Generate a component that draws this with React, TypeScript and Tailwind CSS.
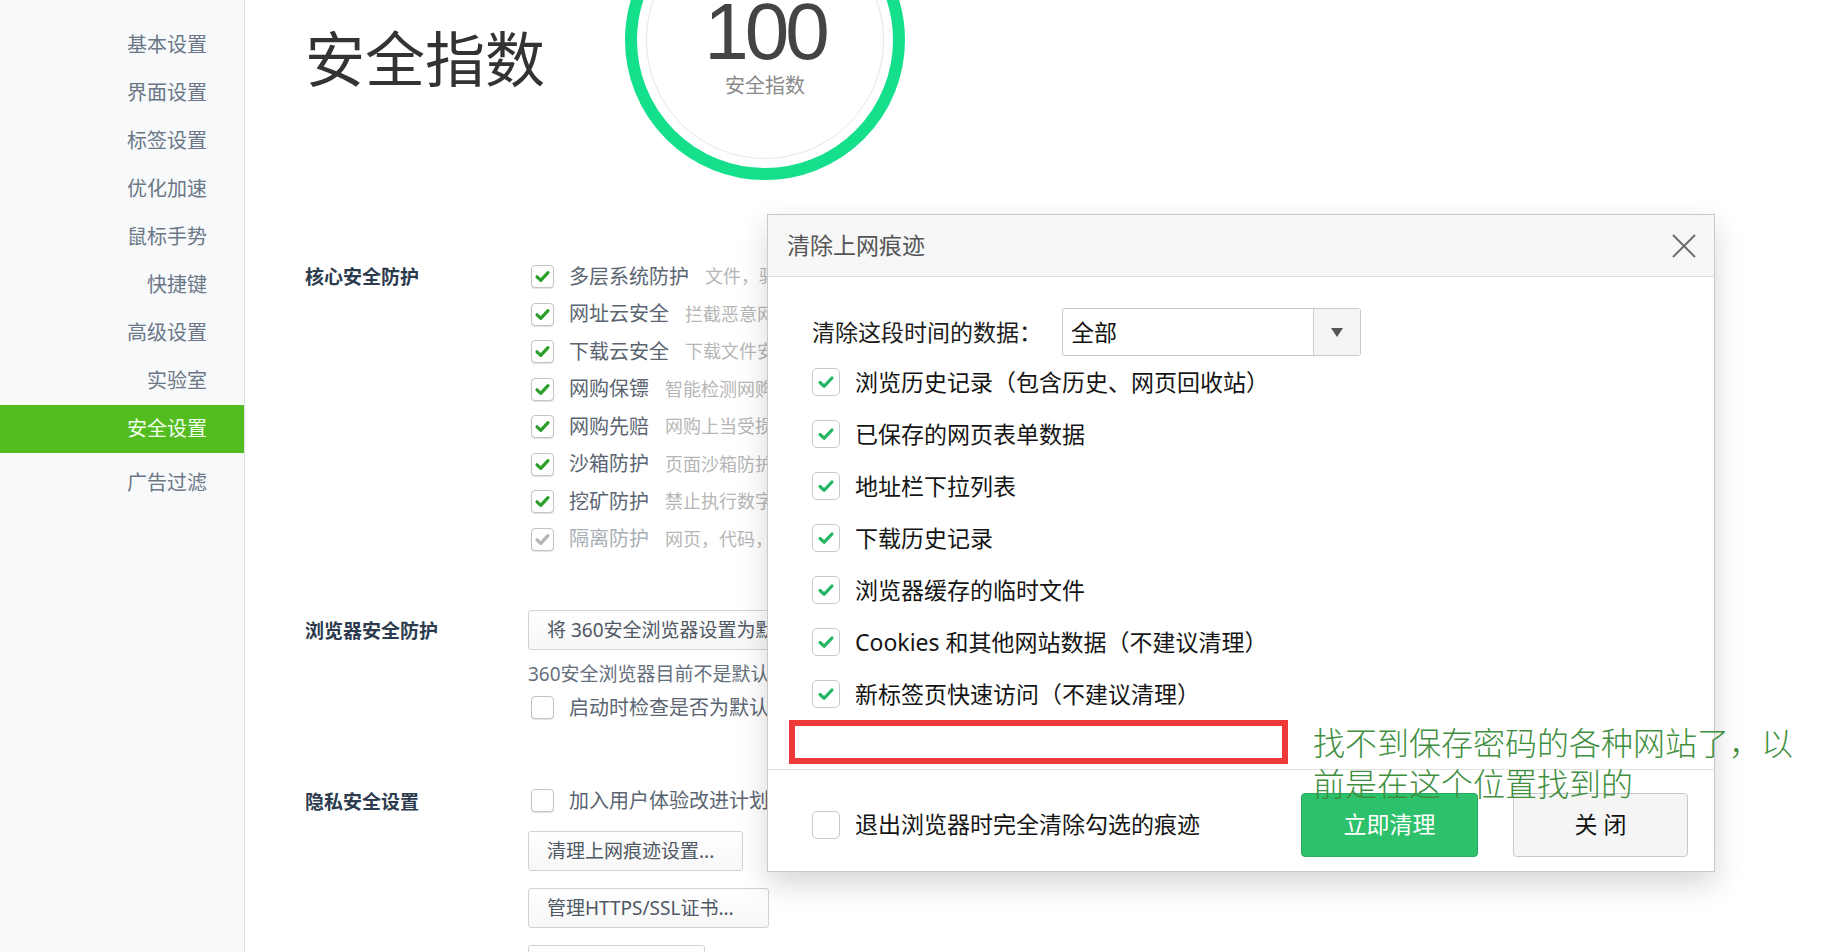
import React from "react"

const FONT = { fontFamily: '"Noto Sans", "Noto Sans CJK SC", sans-serif' }

const navItems = ["基本设置", "界面设置", "标签设置", "优化加速", "鼠标手势", "快捷键", "高级设置", "实验室"]

const coreRows = [
  { label: "多层系统防护", desc: "文件，驱动，注册表多层防护" },
  { label: "网址云安全", desc: "拦截恶意网址和钓鱼网站" },
  { label: "下载云安全", desc: "下载文件安全检测" },
  { label: "网购保镖", desc: "智能检测网购环境安全" },
  { label: "网购先赔", desc: "网购上当受损先行赔付" },
  { label: "沙箱防护", desc: "页面沙箱防护恶意代码" },
  { label: "挖矿防护", desc: "禁止执行数字货币挖矿脚本" },
  { label: "隔离防护", desc: "网页，代码，插件隔离运行", disabled: true },
]

const clearRows = [
  "浏览历史记录（包含历史、网页回收站）",
  "已保存的网页表单数据",
  "地址栏下拉列表",
  "下载历史记录",
  "浏览器缓存的临时文件",
  "Cookies 和其他网站数据（不建议清理）",
  "新标签页快速访问（不建议清理）",
]

function SmallBox({ checked, disabled }: { checked?: boolean; disabled?: boolean }) {
  return (
    <div className="w-[23px] h-[23px] shrink-0 rounded-[4px] border border-[#c4c4c4] bg-white shadow-[0_1px_1px_rgba(0,0,0,0.12)] flex items-center justify-center">
      {checked && (
        <svg width="17" height="17" viewBox="0 0 17 17">
          <path
            d="M3 8.8 L6.8 12.4 L14 4.6"
            fill="none"
            stroke={disabled ? "#b4b4b4" : "#2a9f2a"}
            strokeWidth="3.2"
            strokeLinecap="round"
            strokeLinejoin="round"
          />
        </svg>
      )}
    </div>
  )
}

function BigBox({ checked }: { checked?: boolean }) {
  return (
    <div className="w-[28px] h-[28px] shrink-0 rounded-[5px] border border-[#cacaca] bg-white flex items-center justify-center">
      {checked && (
        <svg width="20" height="20" viewBox="0 0 20 20">
          <path
            d="M4 10.5 L8.2 14.2 L16 6"
            fill="none"
            stroke="#24b662"
            strokeWidth="3.2"
            strokeLinecap="round"
            strokeLinejoin="round"
          />
        </svg>
      )}
    </div>
  )
}

function GrayButton({ children, width }: { children: React.ReactNode; width: string }) {
  return (
    <div
      className={`${width} h-[40px] shrink-0 rounded-[3px] border border-[#cfd2d6] bg-gradient-to-b from-white to-[#f7f7f7] pl-[18px] flex items-center text-[19px] text-[#4f5864] whitespace-nowrap overflow-hidden`}
    >
      {children}
    </div>
  )
}

function Sidebar() {
  return (
    <aside className="w-[245px] shrink-0 h-full bg-[#f7f9fb] border-r border-[#dadde1] pt-[21px]">
      {navItems.map((n) => (
        <div key={n} className="h-[48px] pr-[37px] flex items-center justify-end text-[20px] text-[#6b7786]">
          {n}
        </div>
      ))}
      <div className="h-[48px] pr-[37px] flex items-center justify-end text-[20px] text-[#f2fff0] bg-[#53bd1f]">
        安全设置
      </div>
      <div className="mt-[6px] h-[48px] pr-[37px] flex items-center justify-end text-[20px] text-[#6b7786]">
        广告过滤
      </div>
    </aside>
  )
}

function ScoreRing() {
  return (
    <div className="-mt-[100px] w-[280px] h-[280px] shrink-0 rounded-full border-[12px] border-[#14e08b] flex items-center justify-center">
      <div className="w-[238px] h-[238px] rounded-full border border-[#ece4e4] relative">
        <div className="absolute left-0 right-0 top-[70px] flex flex-col items-center">
          <div
            className="text-[80px] leading-none tracking-[-4px] text-[#444]"
            style={{ fontFamily: '"Liberation Sans", Arial, sans-serif' }}
          >
            100
          </div>
          <div className="mt-[1px] text-[20px] leading-[26px] text-[#8a8a8a]">安全指数</div>
        </div>
      </div>
    </div>
  )
}

function MainPage() {
  return (
    <main className="flex-1 pl-[60px]">
      <div className="flex h-[258px] items-start">
        <h1 className="w-[320px] mt-[29px] text-[60px] leading-none text-[#333] font-normal">安全指数</h1>
        <ScoreRing />
      </div>

      {/* 核心安全防护 */}
      <div className="flex">
        <div className="w-[223px] h-[37.5px] flex items-center text-[19px] font-bold text-[#2c3b4d]">核心安全防护</div>
        <div>
          {coreRows.map((r) => (
            <div key={r.label} className="h-[37.5px] flex items-center pl-[3px] whitespace-nowrap">
              <SmallBox checked disabled={r.disabled} />
              <span className={`ml-[15px] text-[20px] ${r.disabled ? "text-[#a9afb6]" : "text-[#5b6572]"}`}>{r.label}</span>
              <span className="ml-[16px] text-[18px] text-[#b6b6b6]">{r.desc}</span>
            </div>
          ))}
        </div>
      </div>

      {/* 浏览器安全防护 */}
      <div className="flex mt-[52px]">
        <div className="w-[223px] h-[42px] flex items-center text-[19px] font-bold text-[#2c3b4d]">浏览器安全防护</div>
        <div>
          <GrayButton width="w-[360px]">将 360安全浏览器设置为默认浏览器</GrayButton>
          <div className="mt-[9px] h-[30px] flex items-center text-[19px] text-[#65707d] whitespace-nowrap">
            360安全浏览器目前不是默认浏览器
          </div>
          <div className="h-[37px] flex items-center pl-[3px] whitespace-nowrap">
            <SmallBox />
            <span className="ml-[15px] text-[20px] text-[#5b6572]">启动时检查是否为默认浏览器</span>
          </div>
        </div>
      </div>

      {/* 隐私安全设置 */}
      <div className="flex mt-[56px]">
        <div className="w-[223px] h-[40px] flex items-center text-[19px] font-bold text-[#2c3b4d]">隐私安全设置</div>
        <div>
          <div className="h-[37px] flex items-center pl-[3px] whitespace-nowrap">
            <SmallBox />
            <span className="ml-[15px] text-[20px] text-[#5b6572]">加入用户体验改进计划</span>
          </div>
          <div className="mt-[12px] flex flex-col gap-[17px]">
            <GrayButton width="w-[215px]">清理上网痕迹设置...</GrayButton>
            <GrayButton width="w-[241px]">管理HTTPS/SSL证书...</GrayButton>
            <GrayButton width="w-[177px]">内容设置...</GrayButton>
          </div>
        </div>
      </div>
    </main>
  )
}

function ClearDialog() {
  return (
    <div className="absolute left-[767px] top-[214px] w-[948px] h-[658px] bg-white border border-[#c9c9c9] shadow-[0_12px_28px_rgba(0,0,0,0.16)] flex flex-col">
      <div className="h-[62px] shrink-0 bg-[#f7f7f7] border-b border-[#dcdcdc] pl-[19px] pr-[17px] flex items-center justify-between">
        <span className="text-[23px] text-[#555]">清除上网痕迹</span>
        <svg width="26" height="26" viewBox="0 0 26 26">
          <path d="M2 2 L24 24 M24 2 L2 24" stroke="#6f6f6f" strokeWidth="2" />
        </svg>
      </div>

      <div className="pl-[44px] pt-[31px]">
        <div className="h-[48px] flex items-center">
          <span className="w-[250px] text-[23px] text-[#1d1d1d]">清除这段时间的数据：</span>
          <div className="w-[299px] h-[48px] rounded-[3px] border border-[#c8c8c8] flex">
            <div className="flex-1 pl-[8px] flex items-center text-[23px] text-[#111]">全部</div>
            <div className="w-[47px] border-l border-[#cfcfcf] bg-[#f4f4f4] flex items-center justify-center">
              <svg width="12" height="9" viewBox="0 0 12 9">
                <path d="M0 0 H12 L6 9 Z" fill="#555" />
              </svg>
            </div>
          </div>
        </div>
        {clearRows.map((t) => (
          <div key={t} className="h-[52px] flex items-center">
            <BigBox checked />
            <span className="ml-[15px] text-[23px] text-[#151515] whitespace-nowrap">{t}</span>
          </div>
        ))}
      </div>

      {/* placeholder where the password row used to be */}
      <div className="ml-[21px] w-[499px] h-[44px] shrink-0 border-[6px] border-[#ef3838]" />

      <div className="mt-[5px] flex-1 border-t border-[#e2e2e2] pl-[44px] pr-[26px] pt-[8px] flex items-center">
        <BigBox />
        <span className="ml-[15px] text-[23px] text-[#151515]">退出浏览器时完全清除勾选的痕迹</span>
        <div className="ml-auto flex gap-[35px]">
          <div className="w-[177px] h-[64px] rounded-[4px] bg-[#2ec16b] border border-[#27aa5d] flex items-center justify-center text-[23px] text-white">
            立即清理
          </div>
          <div className="w-[175px] h-[64px] rounded-[4px] bg-[#f5f5f5] border border-[#c9c9c9] flex items-center justify-center text-[23px] text-[#111]">
            关 闭
          </div>
        </div>
      </div>
    </div>
  )
}

export default function App() {
  return (
    <div className="relative flex h-[952px] w-[1822px] overflow-hidden bg-white" style={FONT}>
      <Sidebar />
      <MainPage />
      <ClearDialog />
      <div
        className="absolute left-[1313px] top-[724px] text-[32px] leading-[41px] text-[#3f8f3f] font-light whitespace-nowrap"
        style={{ fontFamily: '"Liberation Serif", "Noto Sans CJK SC", serif' }}
      >
        找不到保存密码的各种网站了，以
        <br />
        前是在这个位置找到的
      </div>
    </div>
  )
}
